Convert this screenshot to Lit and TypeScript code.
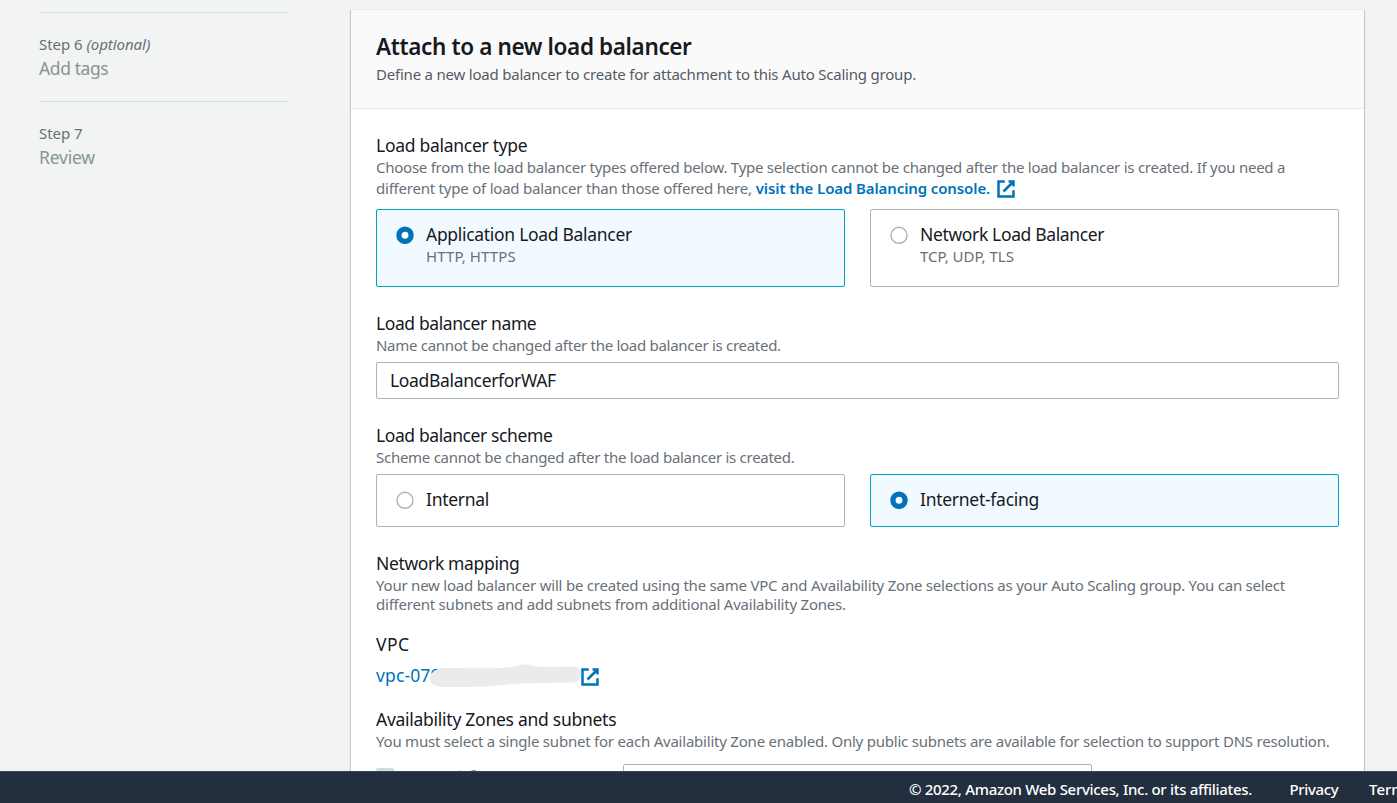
import { LitElement, html, css, svg, TemplateResult } from "lit";
import { customElement, property } from "lit/decorators.js";

@customElement("external-icon")
export class ExternalIcon extends LitElement {
  static styles = css`
    :host { display: inline-block; width: 20px; height: 20px; flex: none; }
    svg { display: block; fill: none; stroke: #0073bb; stroke-width: 2; }
  `;
  render() {
    return html`<svg width="20" height="20" viewBox="0 0 16 16">
      <path d="M10 2h4v4M6 10l8-8M14 9.048V14H2V2h5" />
    </svg>`;
  }
}

@customElement("radio-tile")
export class RadioTile extends LitElement {
  @property({ type: Boolean, reflect: true }) checked = false;
  static styles = css`
    :host {
      display: flex; box-sizing: border-box; gap: 12px; padding: 13px 19px;
      border: 1px solid #aab7b8; border-radius: 2px; background: #fff; min-width: 0;
    }
    :host([checked]) { border-color: #00a1c9; background: #f1faff; }
    .dot { width: 18px; height: 18px; flex: none; margin-top: 3px; }
    .off { fill: #fff; stroke: #aab7b8; stroke-width: 1.4; }
    .on { fill: #fff; stroke: #0073bb; stroke-width: 5.3; }
  `;
  render() {
    return html`
      <svg class="dot" viewBox="0 0 18 18">
        ${this.checked
          ? svg`<circle class="on" cx="9" cy="9.3" r="6.1" />`
          : svg`<circle class="off" cx="9" cy="9.3" r="8" />`}
      </svg>
      <div><slot></slot></div>
    `;
  }
}

@customElement("app-root")
export class AppRoot extends LitElement {
  static styles = css`
    :host {
      display: flex; flex-direction: column; width: 100%; height: 803px; overflow: hidden;
      background: #f2f3f3; color: #16191f; white-space: nowrap;
      font-family: "Noto Sans", "Open Sans", sans-serif; font-size: 15px; line-height: 20px;
    }
    * { box-sizing: border-box; }
    .main { display: flex; flex: 1; min-height: 0; overflow: hidden; }

    .steps { width: 351px; flex: none; padding: 12px 62px 0 39px; }
    .step { height: 89px; border-top: 1px solid #d5dbdb; padding-top: 20px; color: #687078; }
    .step-label { line-height: 22px; letter-spacing: -.04px; }
    .step-name { margin-top: 1px; font-size: 17.5px; line-height: 25px; color: #879596; }

    .panel {
      width: 1013px; height: 900px; flex: none; margin-top: 9px; background: #fff;
      border-top: 1px solid #eaeded;
      box-shadow: 0 1px 1px 0 rgba(0,28,36,.3), 1px 1px 1px 0 rgba(0,28,36,.15), -1px 1px 1px 0 rgba(0,28,36,.15);
    }
    .head { height: 99px; padding: 21px 25px 0; background: #fafafa; border-bottom: 1px solid #eaeded; }
    .title { margin: 0; font-size: 22.5px; font-weight: 600; line-height: 31px; letter-spacing: -.37px; }
    .subtitle { color: #545b64; line-height: 25px; letter-spacing: -.21px; }
    .body { display: flex; flex-direction: column; padding: 25px; }

    .label { font-size: 17.5px; line-height: 22px; }
    .desc { margin-top: 1px; color: #687078; line-height: 20px; }
    .field + .field { margin-top: 25px; }
    .field + .field.tight { margin-top: 19px; }
    .field + .field.zones { margin-top: 22px; }
    .tall .line { display: flex; line-height: 21px; }
    .short { margin-top: 2px; }
    .short .line { display: block; line-height: 19px; }
    .tiles { display: grid; grid-template-columns: 469px 469px; gap: 25px; margin-top: 7px; }
    .type-tiles { height: 78px; margin-top: 10px; }
    .scheme-tiles { height: 53px; }
    .tile-desc { color: #687078; line-height: 22px; }
    .input {
      height: 37px; margin-top: 7px; padding: 0 13px; border: 1px solid #aab7b8; border-radius: 2px;
      font-size: 17.5px; line-height: 35px; letter-spacing: -.34px;
    }
    .link { color: #0073bb; font-weight: 600; letter-spacing: -.11px; margin-left: 4px; }
    .link-icon { margin: 1px 0 -1px 5.5px; }

    .vpc { display: flex; position: relative; height: 22px; margin-top: 9px; color: #0073bb; font-size: 17.5px; line-height: 22px; }
    .vpc-id { width: 204px; letter-spacing: .12px; }
    .vpc-icon { margin-top: 3px; }
    .smudge { position: absolute; left: 53px; top: 0; width: 156px; height: 26px; }
    .smudge path { fill: #ebebeb; }

    .zone { display: flex; margin-top: 13px; height: 37px; }
    .check { width: 18px; height: 18px; margin: 4px 9px 0 0; background: #d5dbdb; border-radius: 2px; }
    .zone-name { width: 220px; padding-top: 1px; font-size: 17.5px; line-height: 22px; letter-spacing: .15px; color: #879596; }
    .select { width: 469px; border: 1px solid #aab7b8; border-radius: 2px; }

    .footer {
      display: flex; flex: none; height: 32px; padding-left: 909px; background: #232f3e; color: #fff;
      border-top: 1px solid #37475a; font-weight: 500; line-height: 35px; overflow: hidden;
    }
    .footer > * { flex: none; }
    .copy { width: 380.5px; letter-spacing: -.31px; }
    .privacy { width: 79.5px; letter-spacing: -.35px; }

    .k22 { letter-spacing: -.22px; }
    .k25 { letter-spacing: -.25px; } .k26 { letter-spacing: -.27px; }
    .k30 { letter-spacing: -.3px; } .k28 { letter-spacing: -.285px; } .k35 { letter-spacing: -.355px; }
    .k37 { letter-spacing: -.4px; } .w12 { letter-spacing: .12px; } .w60 { letter-spacing: .5px; }
  `;

  private step(label: unknown, name: string, kern: string): TemplateResult {
    return html`<div class="step">
      <div class="step-label">${label}</div>
      <div class="step-name ${kern}">${name}</div>
    </div>`;
  }

  render() {
    return html`
      <div class="main">
        <nav class="steps">
          ${this.step(html`Step 6 <i>(optional)</i>`, "Add tags", "k37")}
          ${this.step("Step 7", "Review", "k22")}
        </nav>
        <section class="panel">
          <header class="head">
            <h2 class="title">Attach to a new load balancer</h2>
            <div class="subtitle">Define a new load balancer to create for attachment to this Auto Scaling group.</div>
          </header>
          <div class="body">
            <div class="field">
              <div class="label k28">Load balancer type</div>
              <div class="desc tall">
                <div class="line k25">Choose from the load balancer types offered below. Type selection cannot be changed after the load balancer is created. If you need a</div>
                <div class="line"><span class="k22">different type of load balancer than those offered here,</span><a class="link">visit the Load Balancing console.</a><external-icon class="link-icon"></external-icon></div>
              </div>
              <div class="tiles type-tiles">
                <radio-tile checked>
                  <div class="label k30">Application Load Balancer</div>
                  <div class="tile-desc w12">HTTP, HTTPS</div>
                </radio-tile>
                <radio-tile>
                  <div class="label k35">Network Load Balancer</div>
                  <div class="tile-desc">TCP, UDP, TLS</div>
                </radio-tile>
              </div>
            </div>

            <div class="field">
              <div class="label k37">Load balancer name</div>
              <div class="desc k28">Name cannot be changed after the load balancer is created.</div>
              <div class="input">LoadBalancerforWAF</div>
            </div>

            <div class="field">
              <div class="label k37">Load balancer scheme</div>
              <div class="desc k26">Scheme cannot be changed after the load balancer is created.</div>
              <div class="tiles scheme-tiles">
                <radio-tile><div class="label k30">Internal</div></radio-tile>
                <radio-tile checked><div class="label k26">Internet-facing</div></radio-tile>
              </div>
            </div>

            <div class="field">
              <div class="label k35">Network mapping</div>
              <div class="desc short">
                <span class="line k22">Your new load balancer will be created using the same VPC and Availability Zone selections as your Auto Scaling group. You can select</span>
                <span class="line k22">different subnets and add subnets from additional Availability Zones.</span>
              </div>
            </div>

            <div class="field tight">
              <div class="label w60">VPC</div>
              <div class="vpc">
                <span class="vpc-id">vpc-079</span>
                <external-icon class="vpc-icon"></external-icon>
                <svg class="smudge" viewBox="0 0 156 26">
                  <path d="M4 8C8 4.5 12 4 16 4C38 4 62 5 77 3.5C87 3 91 .5 97 .5C103 1 103 2.5 109 2.5C123 3 138 2.5 145 2.5C152 4 154 10 151 14C149 18 147 18.5 141 18.5C119 19 97 19 81 20C63 23 43 23 20 23C9 23 1 22 1 15C1 12 2 10 4 8Z" />
                </svg>
              </div>
            </div>

            <div class="field zones">
              <div class="label k26">Availability Zones and subnets</div>
              <div class="desc k22">You must select a single subnet for each Availability Zone enabled. Only public subnets are available for selection to support DNS resolution.</div>
              <div class="zone">
                <span class="check"></span>
                <span class="zone-name">us-east-2a</span>
                <span class="select"></span>
              </div>
            </div>
          </div>
        </section>
      </div>
      <footer class="footer">
        <span class="copy">© 2022, Amazon Web Services, Inc. or its affiliates.</span>
        <a class="privacy">Privacy</a>
        <a class="terms">Terms</a>
      </footer>
    `;
  }
}
